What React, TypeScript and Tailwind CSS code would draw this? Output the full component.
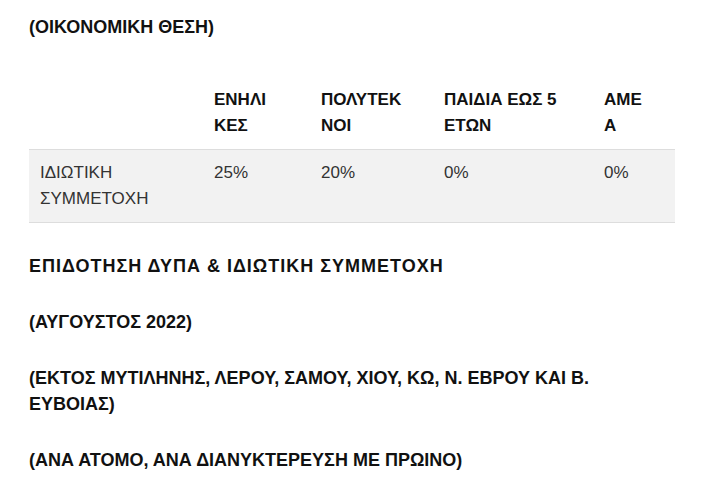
import React from "react";

export default function App() {
  const font = { fontFamily: '"Liberation Sans", Arial, sans-serif' };
  const th = "pl-[12px] pr-0 py-[10px] text-left align-top font-bold text-[#111]";
  const td = "pl-[12px] pr-0 py-[10px] align-top";
  return (
    <div className="bg-white w-[710px] h-[483px] overflow-hidden text-[18px] leading-[26px]" style={font}>
      <div className="ml-[29px] w-[646px] pt-[14px]">
        <p className="font-bold text-[#111]">(ΟΙΚΟΝΟΜΙΚΗ ΘΕΣΗ)</p>
        <table className="mt-[37px] w-[646px] table-fixed border-collapse text-[#333] text-[17px]">
          <colgroup>
            <col className="w-[173px]" />
            <col className="w-[107px]" />
            <col className="w-[123px]" />
            <col className="w-[160px]" />
            <col className="w-[83px]" />
          </colgroup>
          <thead>
            <tr>
              <th className={th}></th>
              <th className={th}><div className="w-[58px] break-all">ΕΝΗΛΙΚΕΣ</div></th>
              <th className={th}><div className="w-[84px] break-all">ΠΟΛΥΤΕΚΝΟΙ</div></th>
              <th className={th}><div className="w-[118px]">ΠΑΙΔΙΑ ΕΩΣ 5 ΕΤΩΝ</div></th>
              <th className={th}><div className="w-[42px] break-all">ΑΜΕΑ</div></th>
            </tr>
          </thead>
          <tbody>
            <tr className="bg-[#f2f2f2] border-t border-b border-[#dddddd]">
              <td className="pl-[11px] pr-0 py-[10px] align-top"><div className="w-[120px]">ΙΔΙΩΤΙΚΗ ΣΥΜΜΕΤΟΧΗ</div></td>
              <td className={td}>25%</td>
              <td className={td}>20%</td>
              <td className={td}>0%</td>
              <td className={td}>0%</td>
            </tr>
          </tbody>
        </table>
        <div className="mt-[30px] flex flex-col gap-[30px] font-bold text-[#111]">
          <p className="tracking-[1px]">ΕΠΙΔΟΤΗΣΗ ΔΥΠΑ &amp; ΙΔΙΩΤΙΚΗ ΣΥΜΜΕΤΟΧΗ</p>
          <p>(ΑΥΓΟΥΣΤΟΣ 2022)</p>
          <p className="w-[600px]">(ΕΚΤΟΣ ΜΥΤΙΛΗΝΗΣ, ΛΕΡΟΥ, ΣΑΜΟΥ, ΧΙΟΥ, ΚΩ, Ν. ΕΒΡΟΥ ΚΑΙ Β. ΕΥΒΟΙΑΣ)</p>
          <p>(ΑΝΑ ΑΤΟΜΟ, ΑΝΑ ΔΙΑΝΥΚΤΕΡΕΥΣΗ ΜΕ ΠΡΩΙΝΟ)</p>
        </div>
      </div>
    </div>
  );
}
